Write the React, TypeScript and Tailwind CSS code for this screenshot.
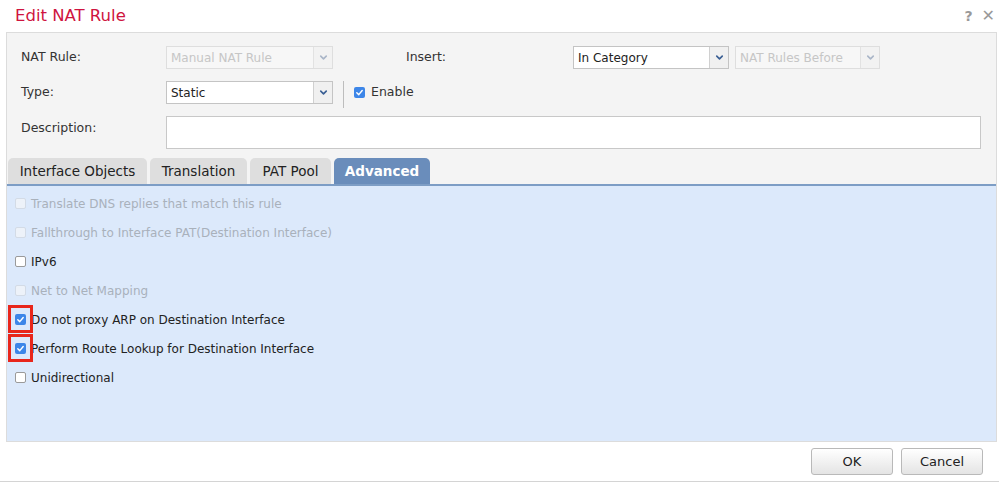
import { ChevronDown } from "lucide-react";

const FONT = { fontFamily: '"DejaVu Sans", Verdana, sans-serif' };

function Select({
  value,
  width,
  disabled,
}: {
  value: string;
  width: string;
  disabled?: boolean;
}) {
  return (
    <div
      className={`flex h-[23px] ${width} border ${
        disabled ? "border-[#dedede] bg-[#f7f7f7]" : "border-[#c4c4c4] bg-white"
      }`}
    >
      <div
        className={`flex flex-1 items-center pl-[4px] text-[12px] ${
          disabled ? "text-[#c6c6c6]" : "text-[#222]"
        }`}
      >
        {value}
      </div>
      <div
        className={`flex w-[19px] items-center justify-center border-l ${
          disabled ? "border-[#e2e2e2] bg-[#f2f2f2]" : "border-[#d0d0d0] bg-[#f0f0f0]"
        }`}
      >
        <ChevronDown
          size={11}
          strokeWidth={3.5}
          className={disabled ? "text-[#aab6c8]" : "text-[#3a5f94]"}
        />
      </div>
    </div>
  );
}

function Check({
  checked,
  disabled,
}: {
  checked?: boolean;
  disabled?: boolean;
}) {
  if (checked) {
    return (
      <span className="flex h-[11px] w-[11px] items-center justify-center rounded-[2px] bg-[#3d86e8]">
        <svg width="9" height="9" viewBox="0 0 10 10">
          <path
            d="M2 5.2 L4.2 7.4 L8 2.8"
            fill="none"
            stroke="white"
            strokeWidth="1.6"
            strokeLinecap="round"
            strokeLinejoin="round"
          />
        </svg>
      </span>
    );
  }
  return (
    <span
      className={`block h-[11px] w-[11px] rounded-[2px] border ${
        disabled ? "border-[#d3dbe6] bg-[#edf2f9]" : "border-[#9a9a9a] bg-white"
      }`}
    />
  );
}

const OPTIONS = [
  { label: "Translate DNS replies that match this rule", disabled: true },
  { label: "Fallthrough to Interface PAT(Destination Interface)", disabled: true },
  { label: "IPv6" },
  { label: "Net to Net Mapping", disabled: true },
  { label: "Do not proxy ARP on Destination Interface", checked: true, marked: true },
  { label: "Perform Route Lookup for Destination Interface", checked: true, marked: true },
  { label: "Unidirectional" },
];

const TABS = [
  { label: "Interface Objects", width: "w-[139px]" },
  { label: "Translation", width: "w-[97px]" },
  { label: "PAT Pool", width: "w-[81px]" },
  { label: "Advanced", width: "w-[96px]", active: true },
];

export default function App() {
  return (
    <div className="h-[483px] w-[999px] overflow-hidden bg-white" style={FONT}>
      {/* title bar */}
      <div className="flex h-[32px] items-center justify-between pl-[15px] pr-[4px]">
        <span className="text-[16.5px] text-[#cf1440]">Edit NAT Rule</span>
        <div className="flex items-center gap-[9px] text-[14px] font-bold text-[#999]">
          <span>?</span>
          <span className="text-[16px] font-normal">✕</span>
        </div>
      </div>

      <div className="ml-[6px] w-[991px] border border-[#dcdcdc]">
        {/* form */}
        <div className="bg-[#f4f4f4] pt-[13px]">
          <div className="flex h-[23px] items-center pl-[14px]">
            <span className="w-[145px] text-[12.5px] text-[#333]">NAT Rule:</span>
            <Select value="Manual NAT Rule" width="w-[167px]" disabled />
            <span className="ml-[73px] w-[167px] text-[12.5px] text-[#333]">Insert:</span>
            <Select value="In Category" width="w-[156px]" />
            <div className="ml-[6px]">
              <Select value="NAT Rules Before" width="w-[145px]" disabled />
            </div>
          </div>

          <div className="mt-[12px] flex h-[23px] items-center pl-[14px]">
            <span className="w-[145px] text-[12.5px] text-[#333]">Type:</span>
            <Select value="Static" width="w-[167px]" />
            <span className="ml-[10px] mt-[4px] h-[27px] w-px bg-[#bdbdbd]" />
            <span className="ml-[10px] flex items-center gap-[6px] text-[12.5px] text-[#333]">
              <Check checked />
              Enable
            </span>
          </div>

          <div className="mt-[12px] flex items-start pl-[14px]">
            <span className="w-[145px] pt-[3px] text-[12.5px] text-[#333]">Description:</span>
            <div className="h-[33px] w-[815px] border border-[#c8c8c8] bg-white" />
          </div>

          {/* tabs */}
          <div className="mt-[9px] flex gap-[3px] border-b-2 border-[#7d9dc5] pl-px">
            {TABS.map((t) => (
              <div
                key={t.label}
                className={`flex h-[26px] items-center justify-center rounded-t-[5px] pt-px text-[13.5px] ${t.width} ${
                  t.active ? "bg-[#6a8dbb] font-bold text-white" : "bg-[#dedede] text-[#222]"
                }`}
              >
                {t.label}
              </div>
            ))}
          </div>
        </div>

        {/* advanced */}
        <div className="h-[255px] bg-[#dce9fb] pt-[3px]">
          {OPTIONS.map((o) => (
            <div key={o.label} className="relative flex h-[29px] items-center gap-[5px] pl-[8px]">
              <Check checked={o.checked} disabled={o.disabled} />
              <span className={`text-[12px] ${o.disabled ? "text-[#a9b1bb]" : "text-[#222]"}`}>
                {o.label}
              </span>
              {o.marked && (
                <span className="absolute left-[1px] top-[0px] h-[28px] w-[25px] border-[3px] border-[#e8261b]" />
              )}
            </div>
          ))}
        </div>
      </div>

      {/* footer */}
      <div className="flex h-[40px] items-center justify-end gap-[8px] border-b border-[#d4d4d4] pr-[16px]">
        <button className="h-[27px] w-[82px] rounded-[3px] border border-[#b9b9b9] bg-gradient-to-b from-white to-[#e4e4e4] text-[13px] text-[#222]">
          OK
        </button>
        <button className="h-[27px] w-[82px] rounded-[3px] border border-[#b9b9b9] bg-gradient-to-b from-white to-[#e4e4e4] text-[13px] text-[#222]">
          Cancel
        </button>
      </div>
    </div>
  );
}
